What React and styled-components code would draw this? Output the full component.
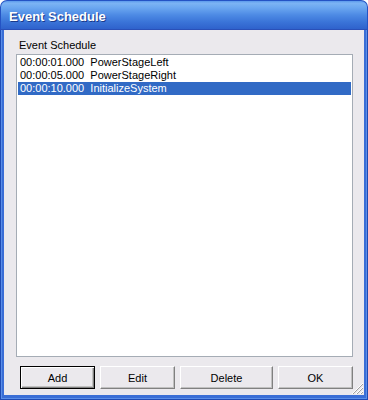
import React from "react";
import styled, { createGlobalStyle } from "styled-components";

const Global = createGlobalStyle`
  html, body {
    margin: 0;
    padding: 0;
    background: #fff;
  }
  * {
    box-sizing: border-box;
  }
`;

const Window = styled.div`
  width: 368px;
  height: 400px;
  display: flex;
  flex-direction: column;
  font-family: "Liberation Sans", Arial, sans-serif;
  font-size: 11px;
  color: #000;
`;

const TitleBar = styled.div`
  height: 30px;
  display: flex;
  align-items: center;
  padding: 2px 0 0 8px;
  border-radius: 7px 7px 0 0;
  border: 1px solid #2453c4;
  border-bottom: 1px solid #2a50b8;
  background: linear-gradient(
    to bottom,
    #5c9aec 0%,
    #7cb4f4 8%,
    #6aa6f0 25%,
    #4d8ae4 50%,
    #3a74d8 75%,
    #2f62cc 100%
  );
  color: #fff;
  font-size: 13px;
  font-weight: bold;
  text-shadow: 1px 1px 0 #1a3a8a;
`;

const Frame = styled.div`
  flex: 1;
  display: flex;
  flex-direction: column;
  background: #ebe9ed;
  border-left: 4px solid #3a6ed6;
  border-right: 4px solid #3a6ed6;
  border-bottom: 5px solid #3a6ed6;
  box-shadow: inset 1px 0 0 #ebe9ed;
  padding: 8px 11px 6px 12px;
  position: relative;
`;

const FrameEdge = styled.div`
  position: absolute;
  inset: 0 -4px -5px -4px;
  pointer-events: none;
  border-left: 1px solid #1f4bb4;
  border-right: 1px solid #1f4bb4;
  border-bottom: 1px solid #1f4bb4;
  box-shadow: inset 1px 0 0 #5a8ee8, inset -1px 0 0 #5a8ee8, inset 0 -1px 0 #5a8ee8;
`;

const Label = styled.div`
  height: 16px;
  line-height: 15px;
  padding-left: 3px;
`;

const ListBox = styled.div`
  flex: 1;
  background: #fff;
  border: 1px solid #a5acb5;
  padding: 1px 1px;
`;

const Row = styled.div`
  height: 13px;
  line-height: 13px;
  padding-left: 2px;
  white-space: pre;
  background: ${(p) => (p.$selected ? "#316ac5" : "transparent")};
  color: ${(p) => (p.$selected ? "#fff" : "#000")};
`;

const ButtonRow = styled.div`
  display: flex;
  gap: 5px;
  margin-top: 9px;
  padding-left: 4px;
`;

const Button = styled.button`
  width: ${(p) => p.$w}px;
  height: 23px;
  padding: 0;
  font-family: "Liberation Sans", Arial, sans-serif;
  font-size: 11px;
  color: #000;
  background: #ebe9ed;
  border: 1px solid;
  border-color: ${(p) => (p.$default ? "#000" : "#fff #808080 #808080 #fff")};
  box-shadow: ${(p) =>
    p.$default
      ? "inset 1px 1px 0 #fff, inset -1px -1px 0 #808080, inset -2px -2px 0 #c0c0c0"
      : "inset -1px -1px 0 #c0c0c0"};
`;

const Grip = styled.svg`
  position: absolute;
  right: 0;
  bottom: 0;
`;

const events = [
  { time: "00:00:01.000", name: "PowerStageLeft" },
  { time: "00:00:05.000", name: "PowerStageRight" },
  { time: "00:00:10.000", name: "InitializeSystem", selected: true },
];

export default function App() {
  return (
    <>
      <Global />
      <Window>
        <TitleBar>Event Schedule</TitleBar>
        <Frame>
          <FrameEdge />
          <Label>Event Schedule</Label>
          <ListBox>
            {events.map((e) => (
              <Row key={e.time} $selected={e.selected}>
                {e.time + "  " + e.name}
              </Row>
            ))}
          </ListBox>
          <ButtonRow>
            <Button $w={75} $default>Add</Button>
            <Button $w={75}>Edit</Button>
            <Button $w={93}>Delete</Button>
            <Button $w={75}>OK</Button>
          </ButtonRow>
          <Grip width="13" height="13" viewBox="0 0 13 13">
            <path d="M12 1 L1 12 M12 5 L5 12 M12 9 L9 12" stroke="#fff" strokeWidth="1" />
            <path d="M12 2 L2 12 M12 6 L6 12 M12 10 L10 12" stroke="#a0a0a0" strokeWidth="1" />
          </Grip>
        </Frame>
      </Window>
    </>
  );
}
